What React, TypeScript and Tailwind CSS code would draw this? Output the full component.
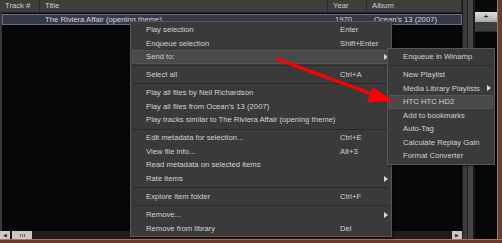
import React from "react";

type Item =
  | { sep: true }
  | { label: string; key?: string; sub?: boolean; hot?: boolean; sep?: false };

const mainMenu: Item[] = [
  { label: "Play selection", key: "Enter" },
  { label: "Enqueue selection", key: "Shift+Enter" },
  { label: "Send to:", sub: true, hot: true },
  { sep: true },
  { label: "Select all", key: "Ctrl+A" },
  { sep: true },
  { label: "Play all files by Neil Richardson" },
  { label: "Play all files from Ocean's 13 (2007)" },
  { label: "Play tracks similar to The Riviera Affair (opening theme)" },
  { sep: true },
  { label: "Edit metadata for selection...", key: "Ctrl+E" },
  { label: "View file info...", key: "Alt+3" },
  { label: "Read metadata on selected items" },
  { label: "Rate items", sub: true },
  { sep: true },
  { label: "Explore item folder", key: "Ctrl+F" },
  { sep: true },
  { label: "Remove...", sub: true },
  { label: "Remove from library", key: "Del" },
];

const sendTo: Item[] = [
  { label: "Enqueue in Winamp" },
  { sep: true },
  { label: "New Playlist" },
  { label: "Media Library Playlists", sub: true },
  { label: "HTC HTC HD2", hot: true },
  { label: "Add to bookmarks" },
  { label: "Auto-Tag" },
  { label: "Calculate Replay Gain" },
  { label: "Format Converter" },
];

function Arrow() {
  return (
    <svg width="4" height="6" viewBox="0 0 4 6" className="block">
      <path d="M0 0 L4 3 L0 6 Z" fill="#d8d8d8" />
    </svg>
  );
}

function Menu({
  items,
  keyX,
  arrowX,
  className,
}: {
  items: Item[];
  keyX: number;
  arrowX: number;
  className: string;
}) {
  return (
    <div
      className={
        "absolute border border-[#585858] bg-[#3a3a3a] py-px shadow-[1px_1px_2px_rgba(0,0,0,0.6)] " +
        className
      }
    >
      {items.map((it, i) =>
        it.sep ? (
          <div key={i} className="flex h-[4.4px] items-center px-[2px]">
            <div className="h-px w-full bg-[#2a2a2a]" />
          </div>
        ) : (
          <div
            key={i}
            className={
              "relative flex h-[13.6px] items-center pl-[13px] " +
              (it.hot ? "mx-px border border-[#555] bg-[#4a4a4a]" : "mx-px border border-transparent")
            }
          >
            <span className="whitespace-nowrap">{it.label}</span>
            {it.key && (
              <span className="absolute whitespace-nowrap" style={{ left: keyX }}>
                {it.key}
              </span>
            )}
            {it.sub && (
              <span className="absolute top-1/2 -translate-y-1/2" style={{ left: arrowX }}>
                <Arrow />
              </span>
            )}
          </div>
        )
      )}
    </div>
  );
}

export default function App() {
  return (
    <div
      className="relative flex h-[243px] w-[502px] flex-col overflow-hidden bg-black text-[7.7px] leading-none text-[#d2d2d2]"
      style={{ fontFamily: '"Liberation Sans", Arial, sans-serif' }}
    >
      <div className="flex h-[239px]">
        {/* track list */}
        <div className="flex w-[462px] flex-col">
          <div className="flex h-[13px] border-b border-[#262626] bg-[#3e3e3e] text-[#cfcfcf]">
            <div className="flex w-[40px] items-center border-r border-[#2a2a2a] pl-[5px]">Track #</div>
            <div className="flex w-[288px] items-center border-r border-[#2a2a2a] pl-[5px]">Title</div>
            <div className="flex w-[39px] items-center border-r border-[#2a2a2a] pl-[5px]">Year</div>
            <div className="flex flex-1 items-center border-r border-[#2a2a2a] pl-[5px]">Album</div>
          </div>
          <div className="flex-1 border-l-2 border-[#3a3a3a] bg-[#070707] pt-px">
            <div className="flex h-[11px] items-center border border-[#6b6f82] bg-[#353847] text-[#d6d6e0]">
              <div className="w-[39px]" />
              <div className="w-[288px] pl-[3px]">The Riviera Affair (opening theme)</div>
              <div className="w-[39px] pl-[5px]">1970</div>
              <div className="pl-[5px]">Ocean's 13 (2007)</div>
            </div>
          </div>
          <div className="flex h-[8px] items-stretch bg-[#1e1e1e]">
            <div className="flex w-[10px] items-center justify-center bg-[#c9c9c9] text-[5px] text-[#333]">◀</div>
            <div className="ml-[2px] flex w-[20px] items-center justify-center gap-px bg-[#c9c9c9]">
              <div className="h-[3px] w-px bg-[#666]" />
              <div className="h-[3px] w-px bg-[#666]" />
              <div className="h-[3px] w-px bg-[#666]" />
            </div>
            <div className="flex-1" />
            <div className="flex w-[10px] items-center justify-center bg-[#c9c9c9] text-[5px] text-[#333]">▶</div>
          </div>
        </div>
        {/* splitter */}
        <div className="flex w-[13px] border-l border-[#1c1c1c]">
          <div className="w-[4px] bg-[#3b3b3b]" />
          <div className="w-px bg-[#222]" />
          <div className="w-[5px] bg-[#454545]" />
          <div className="w-[2px] bg-[#1a1a1a]" />
        </div>
        {/* side panel */}
        <div className="flex w-[22px] flex-col">
          <div className="h-[12px] bg-[#0a0a0a]" />
          <div className="flex h-[10px] items-center justify-center bg-gradient-to-b from-[#dedede] to-[#a9a9a9] text-[8px] font-bold text-[#333]">
            +
          </div>
          <div className="h-[9px] bg-[#3e3e3e]" />
          <div className="flex-1 border-t border-[#2a2a2a] bg-[#070707]" />
        </div>
        <div className="w-[5px] border-l border-[#a57a62] bg-[#6b3c28]" />
      </div>
      <div className="h-[4px] border-t border-[#a57a62] bg-[#6b3c28]" />

      <Menu items={mainMenu} keyX={207} arrowX={251} className="left-[130px] top-[21px] w-[262px]" />
      <Menu items={sendTo} keyX={0} arrowX={97} className="left-[387px] top-[48px] w-[108px]" />

      <svg className="pointer-events-none absolute left-0 top-0" width="502" height="243">
        <line x1="277" y1="59" x2="372" y2="94" stroke="#f00" strokeWidth="3" strokeLinecap="round" />
        <polygon points="393,101 367,102 373,87" fill="#f00" />
      </svg>
    </div>
  );
}
